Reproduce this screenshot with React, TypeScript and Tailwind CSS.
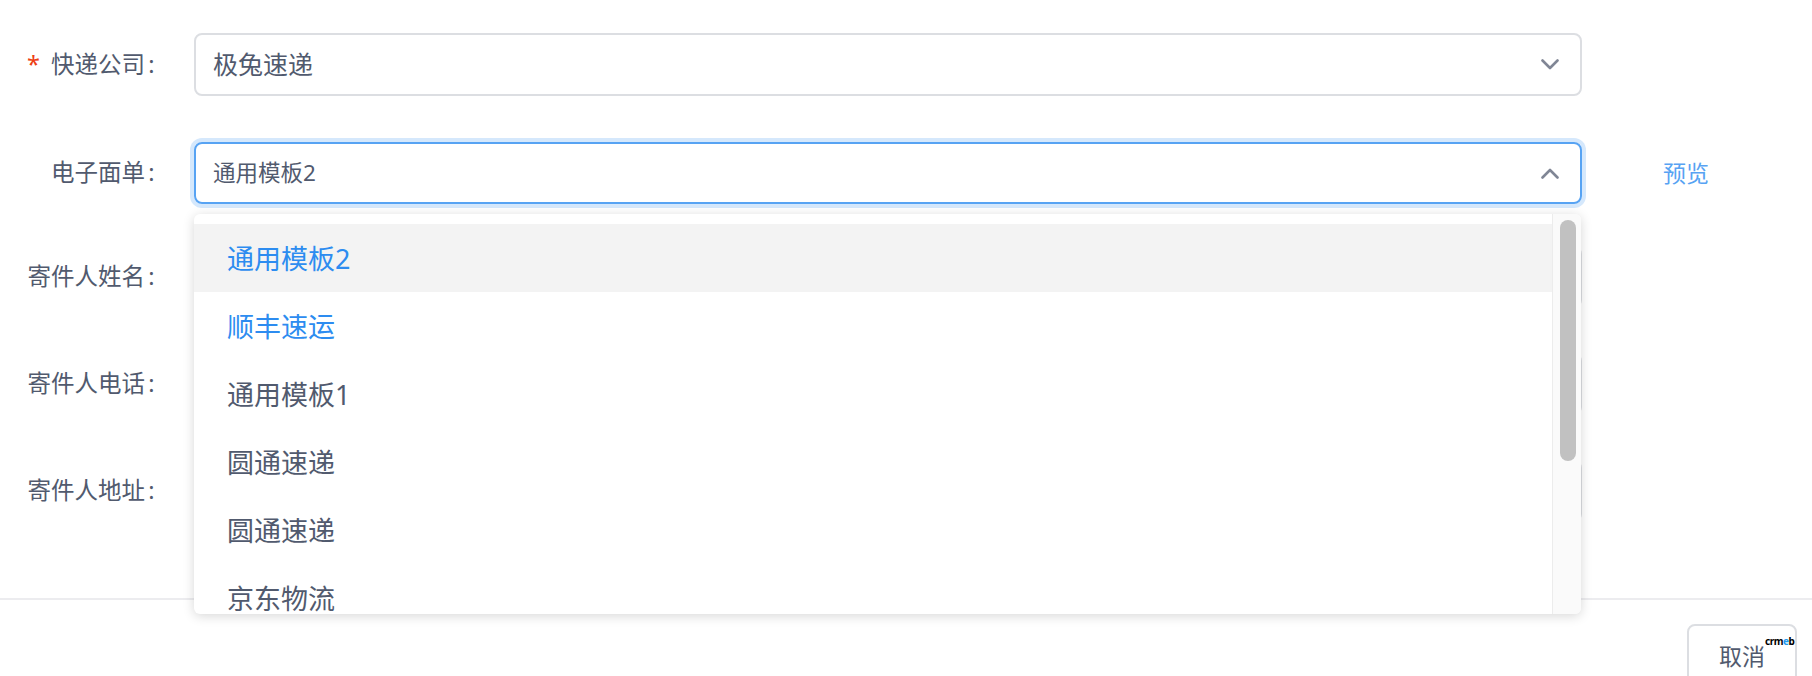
import React from "react";

function Chevron({ up = false }: { up?: boolean }) {
  return (
    <svg width="18" height="11" viewBox="0 0 18 11" fill="none" className="shrink-0">
      <polyline
        points={up ? "1.5,9.5 9,2 16.5,9.5" : "1.5,1.5 9,9 16.5,1.5"}
        stroke="#808695"
        strokeWidth="2.6"
        strokeLinecap="round"
        strokeLinejoin="round"
      />
    </svg>
  );
}

function Row({
  label,
  required,
  className,
  children,
  extra,
}: {
  label: string;
  required?: boolean;
  className: string;
  children: React.ReactNode;
  extra?: React.ReactNode;
}) {
  return (
    <div className={"flex items-center " + className}>
      <div className="w-[194px] shrink-0 pr-[36px] text-right text-[23.5px] leading-none">
        {required && <span className="mr-[11px] text-[#ed4014]">*</span>}
        {label}
        <span className="inline-block w-[13px] text-center">:</span>
      </div>
      <div className="relative h-full w-[1388px] shrink-0">{children}</div>
      {extra}
    </div>
  );
}

const options = [
  { name: "通用模板2", active: true },
  { name: "顺丰速运", active: false, blue: true },
  { name: "通用模板1" },
  { name: "圆通速递" },
  { name: "圆通速递" },
  { name: "京东物流" },
];

export default function App() {
  return (
    <div className="relative h-[676px] w-[1812px] overflow-hidden bg-white font-['Noto_Sans','Noto_Sans_CJK_SC',sans-serif] text-[#515a6e]">
      <div className="pt-[33px]">
        <Row label="快递公司" required className="h-[63px]">
          <div className="flex h-full items-center justify-between rounded-[8px] border-2 border-[#dcdee2] pl-[17px] pr-[21px]">
            <span className="text-[25px] leading-none">极兔速递</span>
            <Chevron />
          </div>
        </Row>

        <Row
          label="电子面单"
          className="mt-[46px] h-[62px]"
          extra={<span className="ml-[81px] text-[23px] leading-none text-[#57a3f3]">预览</span>}
        >
          <div className="flex h-full items-center justify-between rounded-[8px] border-2 border-[#57a3f3] pl-[17px] pr-[21px] shadow-[0_0_0_4px_rgba(45,140,240,0.2)]">
            <span className="text-[22.5px] leading-none">通用模板2</span>
            <Chevron up />
          </div>

          {/* dropdown */}
          <div className="absolute left-0 top-[72px] z-10 flex h-[400px] w-[1387px] overflow-hidden rounded-[6px] bg-white shadow-[0_2px_12px_rgba(0,0,0,0.16)]">
            <ul className="flex-1 pt-[10px]">
              {options.map((o, i) => (
                <li
                  key={i}
                  className={
                    "flex h-[68px] items-center pl-[33px] text-[27px] leading-none " +
                    (o.active ? "bg-[#f3f3f3] text-[#2d8cf0]" : o.blue ? "text-[#2d8cf0]" : "")
                  }
                >
                  {o.name}
                </li>
              ))}
            </ul>
            <div className="w-[29px] border-l border-[#ececec] bg-[#fafafa] pl-[7px] pt-[6px]">
              <div className="h-[241px] w-[16px] rounded-full bg-[#c1c1c1]" />
            </div>
          </div>
        </Row>

        <Row label="寄件人姓名" className="mt-[42px] h-[62px]">
          <div className="h-full rounded-[8px] border-2 border-[#dcdee2]" />
        </Row>
        <Row label="寄件人电话" className="mt-[45px] h-[62px]">
          <div className="h-full rounded-[8px] border-2 border-[#dcdee2]" />
        </Row>
        <Row label="寄件人地址" className="mt-[45px] h-[62px]">
          <div className="h-full rounded-[8px] border-2 border-[#dcdee2]" />
        </Row>
      </div>

      <div className="mt-[76px] h-[2px] bg-[#ececef]" />

      <div className="mt-[24px] flex justify-end pr-[15px]">
        <button className="relative flex h-[64px] w-[110px] items-center justify-center rounded-[8px] border-2 border-[#dcdee2] text-[23px] leading-none text-[#515a6e]">
          取消
          <span className="absolute left-[76px] top-[10px] text-[10px] font-bold leading-none tracking-[-0.5px] text-black">
            crm<span className="text-[#1e9bf0]">e</span>b
          </span>
        </button>
      </div>
    </div>
  );
}
